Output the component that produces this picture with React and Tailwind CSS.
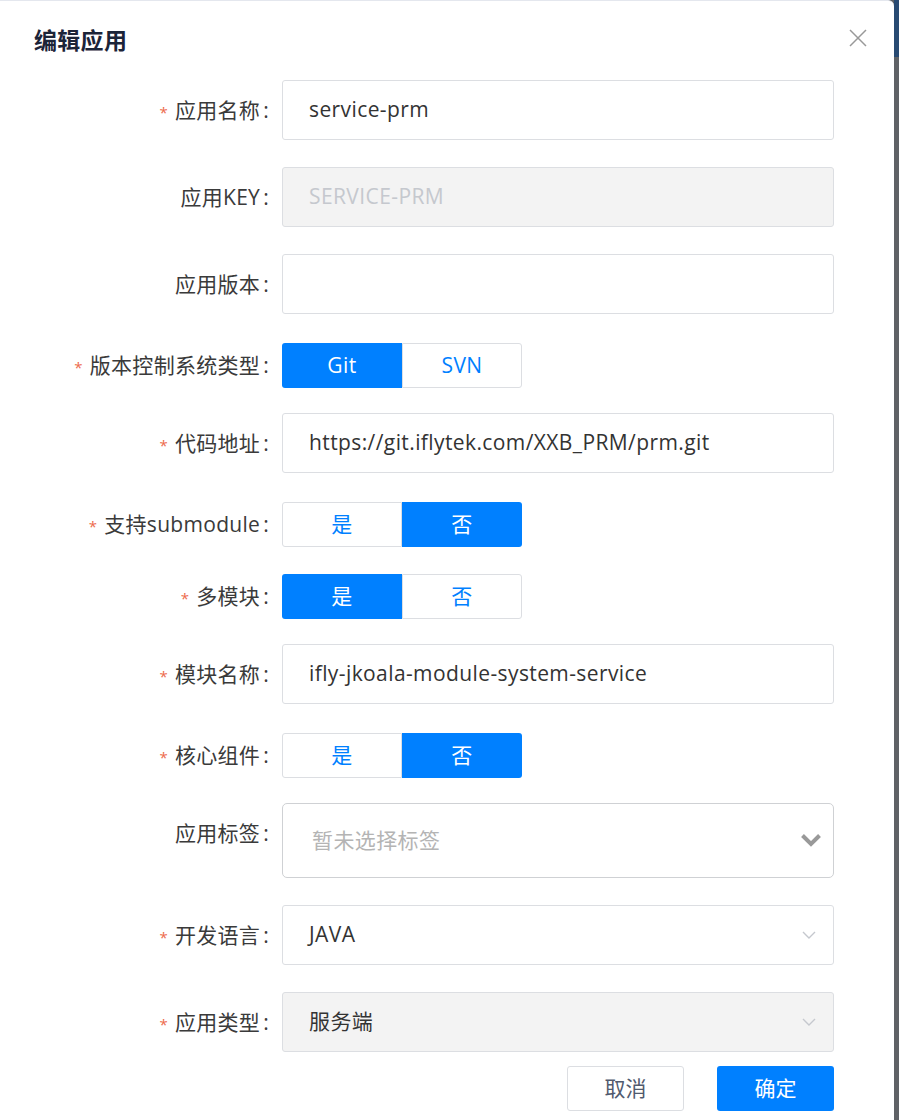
import React from "react";

const font = { fontFamily: '"Open Sans", "Noto Sans CJK SC", sans-serif' };

const Label = ({ text, required, tall }) => (
  <div
    className={
      "w-[282px] shrink-0 pr-[13px] text-right text-[21px] tracking-[0.3px] text-[#3a3a3a] " +
      (tall ? "h-[60px] leading-[60px]" : "h-[45px] leading-[45px]")
    }
  >
    {required && <span className="mr-[7px] text-[15px] text-[#ed6a4c]">*</span>}
    {text}<span className="ml-[3px]">:</span>
  </div>
);

const Input = ({ value, disabled, placeholder }) => (
  <div
    className={
      "flex h-[60px] w-[552px] items-center rounded-[3px] border border-[#dcdee2] pl-[26px] text-[21px] tracking-[0.4px] " +
      (disabled ? "bg-[#f3f3f3] text-[#c5c8ce]" : "bg-white text-[#333]")
    }
  >
    {value || <span className="text-[#c5c8ce]">{placeholder}</span>}
  </div>
);

const ThinChevron = () => (
  <svg width="14" height="9" viewBox="0 0 14 9" className="text-[#c5c8ce]">
    <path d="M1 1l6 6 6-6" fill="none" stroke="currentColor" strokeWidth="1.4" />
  </svg>
);

const Select = ({ value, disabled }) => (
  <div
    className={
      "flex h-[60px] w-[552px] items-center justify-between rounded-[3px] border border-[#dcdee2] pl-[26px] pr-[17px] text-[21px] tracking-[0.4px] text-[#333] " +
      (disabled ? "bg-[#f3f3f3]" : "bg-white")
    }
  >
    <span>{value}</span>
    <ThinChevron />
  </div>
);

const Segment = ({ options, active }) => (
  <div className="flex h-[45px]">
    {options.map((opt, i) => (
      <div
        key={opt}
        className={
          "flex w-[120px] items-center justify-center text-[21px] tracking-[0.4px] " +
          (i === 0 ? "rounded-l-[3px] " : "rounded-r-[3px] ") +
          (i === active
            ? "bg-[#0080ff] text-white"
            : "border border-[#dcdee2] bg-white text-[#0080ff]")
        }
      >
        {opt}
      </div>
    ))}
  </div>
);

const Row = ({ className, children }) => (
  <div className={"flex items-start " + className}>{children}</div>
);

export default function App() {
  return (
    <div className="flex min-h-[1120px] w-full bg-[#5f6266]" style={font}>
      <div className="relative h-[1120px] w-[894px] shrink-0 overflow-hidden rounded-tr-[6px] border-t border-[#e4e7ee] bg-white">
        <div className="flex h-[79px] items-center justify-between pl-[34px] pr-[27px]">
          <h2 className="text-[23px] font-bold tracking-[0.3px] text-[#1c2438]">编辑应用</h2>
          <svg width="18" height="18" viewBox="0 0 18 18" className="-mt-[5px] text-[#999]">
            <path d="M1 1l16 16M17 1L1 17" stroke="currentColor" strokeWidth="1.5" />
          </svg>
        </div>

        <Row className="">
          <Label text="应用名称" required tall />
          <Input value="service-prm" />
        </Row>
        <Row className="mt-[27px]">
          <Label text="应用KEY" tall />
          <Input value="SERVICE-PRM" disabled />
        </Row>
        <Row className="mt-[27px]">
          <Label text="应用版本" tall />
          <Input value="" />
        </Row>
        <Row className="mt-[29px]">
          <Label text="版本控制系统类型" required />
          <Segment options={["Git", "SVN"]} active={0} />
        </Row>
        <Row className="mt-[25px]">
          <Label text="代码地址" required tall />
          <Input value="https://git.iflytek.com/XXB_PRM/prm.git" />
        </Row>
        <Row className="mt-[29px]">
          <Label text="支持submodule" required />
          <Segment options={["是", "否"]} active={1} />
        </Row>
        <Row className="mt-[27px]">
          <Label text="多模块" required />
          <Segment options={["是", "否"]} active={0} />
        </Row>
        <Row className="mt-[25px]">
          <Label text="模块名称" required tall />
          <Input value="ifly-jkoala-module-system-service" />
        </Row>
        <Row className="mt-[29px]">
          <Label text="核心组件" required />
          <Segment options={["是", "否"]} active={1} />
        </Row>
        <Row className="mt-[25px]">
          <Label text="应用标签" tall />
          <div className="flex h-[75px] w-[552px] items-center justify-between rounded-[5px] border border-[#cfd1d4] pl-[29px] pr-[11px] text-[21px] tracking-[0.4px] text-[#b4b4b4]">
            <span>暂未选择标签</span>
            <svg width="22" height="15" viewBox="0 0 22 15" className="text-[#999]">
              <path d="M2.5 2.5l8.5 8.5 8.5-8.5" fill="none" stroke="currentColor" strokeWidth="4" />
            </svg>
          </div>
        </Row>
        <Row className="mt-[27px]">
          <Label text="开发语言" required tall />
          <Select value="JAVA" />
        </Row>
        <Row className="mt-[27px]">
          <Label text="应用类型" required tall />
          <Select value="服务端" disabled />
        </Row>

        <div className="mt-[14px] flex w-[834px] justify-end gap-[33px]">
          <button className="h-[45px] w-[117px] rounded-[3px] border border-[#dcdee2] bg-white text-[21px] text-[#515a6e]">
            取消
          </button>
          <button className="h-[45px] w-[117px] rounded-[3px] bg-[#0080ff] text-[21px] text-white">
            确定
          </button>
        </div>
      </div>
      <div className="flex flex-1 flex-col">
        <div className="h-[57px] bg-[#284a72]" />
        <div className="flex-1 bg-[#5f6266]" />
      </div>
    </div>
  );
}
